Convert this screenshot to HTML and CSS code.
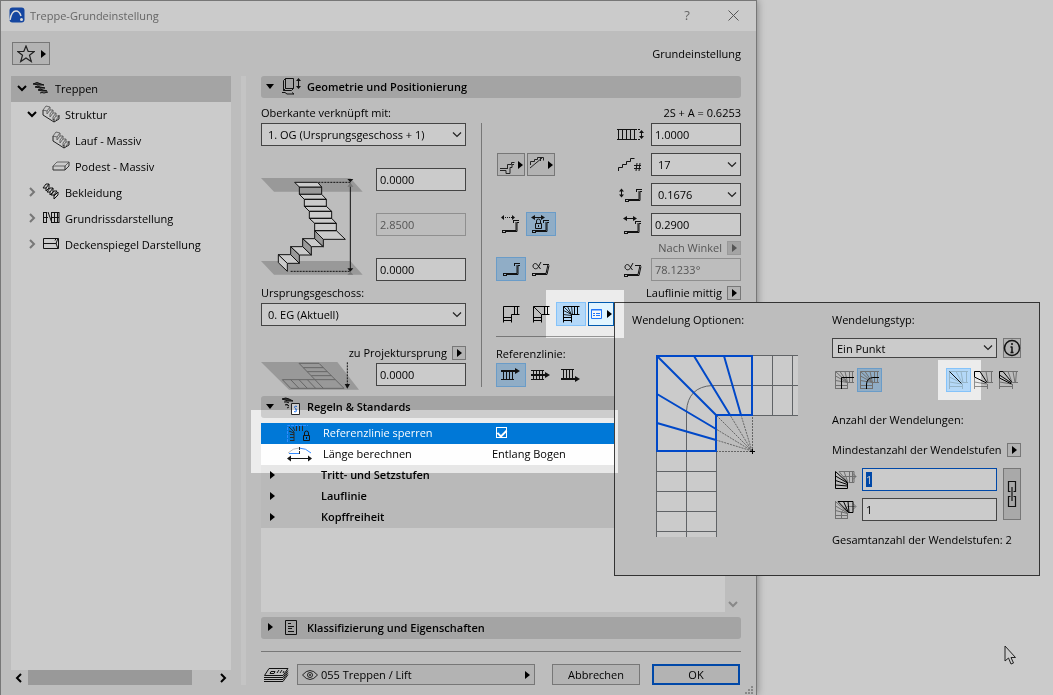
FILE: index.html
```
<!DOCTYPE html>
<html lang="de">
<head>
    <meta charset="UTF-8">
    <meta name="viewport" content="width=device-width, initial-scale=1.0">
    <title>Treppe-Grundeinstellung</title>
    <link rel="stylesheet" href="styles.css">
</head>
<body>

<!-- shared icons -->
<svg class="defs" aria-hidden="true">
    <symbol id="play" viewBox="0 0 5 8"><path d="M0 0L5 4L0 8z" fill="currentColor"/></symbol>
    <symbol id="down" viewBox="0 0 8 5"><path d="M0 0h8L4 5z" fill="currentColor"/></symbol>
    <symbol id="chev-down" viewBox="0 0 10 10"><path d="M1 3l4 4l4-4" fill="none" stroke="currentColor" stroke-width="2"/></symbol>
    <symbol id="chev-right" viewBox="0 0 10 10"><path d="M3 1l4 4l-4 4" fill="none" stroke="currentColor" stroke-width="2"/></symbol>
    <symbol id="chev-left" viewBox="0 0 10 10"><path d="M7 1l-4 4l4 4" fill="none" stroke="currentColor" stroke-width="2"/></symbol>
    <symbol id="stair-solid" viewBox="0 0 18 18">
        <path d="M1 5L4 1l4 1l-3 4zM5 6v3l3-4h3l-3 4M8 9v3l3-4h3l-3 4M11 12v3l3-4h3l-3 4M8 2v3M11 5v3M14 8v3" fill="none" stroke="#666"/>
        <path d="M1 5v5l11 7l5-3v-4M12 17v-3" fill="none" stroke="#222"/>
    </symbol>
    <symbol id="step" viewBox="0 0 18 14">
        <path d="M1 11.500h14V3M12 1.500h6M12.500 1v3M1.500 11v3M1 13.500h4M4 12.500h12V3.500h2" fill="none" stroke="#111"/>
    </symbol>
    <symbol id="alpha-step" viewBox="0 0 20 16">
        <path d="M10 1L7 6.500c-2 2.500-5 1-5-1.500s3-3.500 4.500-1L9.500 8M1 12.500h14l2-9M12 3.500h6M1.500 12v3M1 14.500h4M4 13.500h12l2-9" fill="none" stroke="#111"/>
    </symbol>
    <symbol id="corner" viewBox="0 0 18 18">
        <path d="M17.500 1.500h-16v16M9.500 17.500v-8h8M12.500 1.500v8M15.500 1.500v8M1.500 12.500h8M1.500 15.500h8" fill="none" stroke="currentColor"/>
    </symbol>
    <symbol id="fan" viewBox="0 0 18 18">
        <path d="M1.500 1.500l8 8M5.500 1.500l4 8M9.500 1.500l1 8M1.500 5.500l8 4M1.500 9.500l8 1" fill="none" stroke="currentColor" stroke-width="0.800"/>
    </symbol>
    <symbol id="arrow-h" viewBox="0 0 14 5">
        <path d="M3 2.500h8" stroke="#111" fill="none"/><path d="M0 2.500l4-2.500v5zM14 2.500l-4-2.500v5z" fill="#111"/>
    </symbol>
</svg>

<div class="desktop">
    <div class="dialog">
        <header class="titlebar">
            <svg class="app-icon" width="16" height="16" viewBox="0 0 16 16">
                <rect x="0.500" y="0.500" width="15" height="15" rx="3" fill="#1546a0"/>
                <path d="M1 13C2 7 4 4 7 4s4 2 5 5" fill="none" stroke="#ddd" stroke-width="1.500"/>
                <circle cx="12.500" cy="12.500" r="1.500" fill="#ddd"/>
            </svg>
            <span class="title">Treppe-Grundeinstellung</span>
            <button class="title-button help" aria-label="Hilfe">?</button>
            <button class="title-button" aria-label="Schließen">
                <svg width="11" height="11" viewBox="0 0 11 11"><path d="M0.500 0.500l10 10M10.500 0.500l-10 10" stroke="#555"/></svg>
            </button>
        </header>

        <div class="toolbar">
            <button class="favorite" aria-label="Favoriten">
                <svg width="18" height="18" viewBox="0 0 18 18"><path d="M9 1l2.200 5.500h6l-4.700 3.700l1.800 6.300L9 13L3.700 16.500l1.800-6.300L0.800 6.500h6z" fill="none" stroke="#222" stroke-width="1.200"/></svg>
                <svg width="5" height="8"><use href="#play"/></svg>
            </button>
            <span>Grundeinstellung</span>
        </div>

        <div class="content">
            <nav class="sidebar">
                <ul class="tree">
                    <li class="tree-item selected">
                        <svg width="10" height="10"><use href="#chev-down"/></svg>
                        <svg width="18" height="18" viewBox="0 0 18 18"><path d="M1 5q4-3 8 0l3 1h-5zM3 8q3-2 5 0l5 1h-5zM6 11q2-2 5 0l4 1h-5zM8 14q2-1 4 0l4-1" fill="#444" stroke="#111"/></svg>
                        Treppen
                    </li>
                    <li class="tree-item level-1">
                        <svg width="10" height="10"><use href="#chev-down"/></svg>
                        <svg width="18" height="18"><use href="#stair-solid"/></svg>
                        Struktur
                    </li>
                    <li class="tree-item level-2">
                        <svg width="18" height="18"><use href="#stair-solid"/></svg>
                        Lauf - Massiv
                    </li>
                    <li class="tree-item level-2">
                        <svg width="18" height="18" viewBox="0 0 18 18"><path d="M1 9l4-4h12l-4 4z" fill="none" stroke="#666"/><path d="M1 9v4h12l4-4V5M13 9v4" fill="none" stroke="#333"/></svg>
                        Podest - Massiv
                    </li>
                    <li class="tree-item level-1">
                        <svg class="muted" width="10" height="10"><use href="#chev-right"/></svg>
                        <svg width="18" height="18" viewBox="0 0 18 18"><path d="M1 5l3-4h3L4 5zM4 5v3l3-3M5 9l3-4h3L8 9zM8 9v3l3-3M9 12l3-4h3l-3 4zM12 12v4l4-4v-3l-4 4M7 1v4M11 5v4" fill="none" stroke="#111"/></svg>
                        Bekleidung
                    </li>
                    <li class="tree-item level-1">
                        <svg class="muted" width="10" height="10"><use href="#chev-right"/></svg>
                        <svg width="18" height="18" viewBox="0 0 18 18"><path d="M1.500 3v11M4.500 3v11M1 3.500h4M1 8.500h5M1 13.500h4M6 3l4 11M9.500 3v11M12.500 3v11M15.500 3v11M9 3.500h8M9 13.500h8M9 8.500h8M17 3v11" fill="none" stroke="#111"/></svg>
                        Grundrissdarstellung
                    </li>
                    <li class="tree-item level-1">
                        <svg class="muted" width="10" height="10"><use href="#chev-right"/></svg>
                        <svg width="18" height="18" viewBox="0 0 18 18"><path d="M1.500 3.500h15v10h-15zM1.500 8.500h13M14 3.500l-1 2M14 8.500l2-5M14 8.500l2 5" fill="none" stroke="#111"/></svg>
                        Deckenspiegel Darstellung
                    </li>
                </ul>
                <div class="tree-scroll">
                    <svg width="10" height="10"><use href="#chev-left"/></svg>
                    <div class="thumb"></div>
                    <svg width="10" height="10"><use href="#chev-right"/></svg>
                </div>
            </nav>
            <div class="splitter"></div>

            <main class="settings">
                <h2 class="section-head">
                    <svg class="toggle" width="8" height="5"><use href="#down"/></svg>
                    <svg width="20" height="18" viewBox="0 0 20 18"><path d="M4.500 1.500h8v10h-8zM4.500 1.500l-2 2v10l2-2M2.500 13.500h8l2-2M1 15.500h3l2 1.500h7l-2-1.500" fill="none" stroke="#111"/><path d="M17.500 3v7" stroke="#111"/><path d="M15 4l2.500-3l2.500 3zM15 9l2.500 3l2.500-3z" fill="#111"/></svg>
                    Geometrie und Positionierung
                </h2>

                <div class="geometry">
                    <div class="levels">
                        <label class="label-row" for="top-level">Oberkante verknüpft mit:</label>
                        <select id="top-level"><option>1. OG (Ursprungsgeschoss + 1)</option></select>

                        <div class="height-row">
                            <svg width="104" height="113" viewBox="36 294 312 339">
                                <g fill="#999">
                                    <path d="M36 324H304L341 365H75z"/>
                                    <path d="M36 573H304L341 614H75z"/>
                                </g>
                                <g fill="#cbcbcb" stroke="#111" stroke-width="3" stroke-linejoin="round">
                                    <path d="M151 351H218V373H151z" fill="#999"/>
                                    <path d="M137 337H206L218 351H151zM151 373H218L232 388H166zM166 388H232V409H166zM166 409H232L248 424H181zM181 424H248V445H181zM181 445H248L262 460H197zM197 460H262V482H197zM197 482H262L289 508H223z"/>
                                    <path d="M197 506L223 530H187L161 506zM161 530L187 555H151L125 530zM125 554L151 580H115L88 554z"/>
                                    <path d="M197 482L223 508V530L197 506zM161 506L187 530V555L161 530zM125 530L151 555V580L125 554z" fill="#999"/>
                                    <path d="M88 554L115 580V604L88 578z"/>
                                </g>
                                <path d="M208 337H304M125 604H304" stroke="#111" stroke-width="3" stroke-dasharray="6 3"/>
                                <path d="M304 340V600" stroke="#111" stroke-width="3"/>
                                <path d="M295 327H313L304 337zM295 595H313L304 605z" fill="#111"/>
                                <path d="M295 350L304 338L313 350zM295 614L304 605L313 614z" fill="#777"/>
                            </svg>
                            <div class="heights">
                                <input type="text" value="0.0000" aria-label="Versatz oben">
                                <input type="text" value="2.8500" aria-label="Höhe" disabled>
                                <input type="text" value="0.0000" aria-label="Versatz unten">
                            </div>
                        </div>

                        <label class="label-row" for="home-level">Ursprungsgeschoss:</label>
                        <select id="home-level"><option>0. EG (Aktuell)</option></select>

                        <div class="origin-row">
                            <svg width="98" height="28" viewBox="36 81 294 84">
                                <path d="M36 81H265L330 164H120z" fill="#999"/>
                                <path d="M150 85H210L285 160H125L100 134H198zM163 98H223M175 110H235M187 122H247M198 134H259M198 134L223 160M175 134L200 160M150 134L175 160M125 134L150 160" fill="none" stroke="#666" stroke-width="3"/>
                                <path d="M295 82V150" stroke="#111" stroke-width="3" stroke-dasharray="6 3"/>
                                <path d="M287 147H303L295 161z" fill="#111"/>
                            </svg>
                            <div class="origin">
                                <div class="label-row">
                                    <label for="origin">zu Projektursprung</label>
                                    <button class="mini" aria-label="Bezug wählen"><svg width="5" height="8"><use href="#play"/></svg></button>
                                </div>
                                <input id="origin" type="text" value="0.0000">
                            </div>
                        </div>
                    </div>

                    <div class="steps">
                        <div class="label-row">2S + A = 0.6253</div>
                        <div class="row">
                            <svg width="28" height="14" viewBox="0 0 28 14"><path d="M0 1.500h18M0 11.500h18M1.500 1v11M5.500 1v11M9.500 1v11M13.500 1v11M17.500 1v11M24.500 3v7" stroke="#111"/><path d="M18 1.500h6M18 11.500h6" stroke="#111" stroke-dasharray="2 1"/><path d="M22 5l2.500-3l2.500 3zM22 8l2.500 3l2.500-3z" fill="#111"/></svg>
                            <input type="text" value="1.0000" aria-label="Breite">
                        </div>
                        <div class="row">
                            <div class="tools">
                                <button class="tool menu" aria-label="Stufe unten">
                                    <svg width="16" height="18" viewBox="0 0 16 18"><path d="M1 12.500h7M1 14.500h6v3h4v-6h2v-3h2M8.500 13V8.500h4v-2h3" fill="none" stroke="#222"/></svg>
                                    <svg width="5" height="8"><use href="#play"/></svg>
                                </button>
                                <button class="tool menu" aria-label="Stufe oben">
                                    <svg width="16" height="18" viewBox="0 0 16 18"><path d="M1.500 9V5.500h4v-2h3v-2h6v3M1 12l12-10M11.500 1v4" fill="none" stroke="#222"/></svg>
                                    <svg width="5" height="8"><use href="#play"/></svg>
                                </button>
                            </div>
                            <svg width="28" height="16" viewBox="0 0 28 16"><path d="M1.500 14v-3.500h4v-3h4v-3h4v-3h4M17 8.500h7M17 11.500h7M20 6l-1 8M23 6l-1 8" fill="none" stroke="#111"/></svg>
                            <select aria-label="Anzahl der Steigungen"><option>17</option></select>
                        </div>
                        <div class="row">
                            <svg width="26" height="14" viewBox="0 0 26 14"><use href="#step" x="5" width="18" height="14"/><path d="M2.500 2v6" stroke="#111"/><path d="M0 3.500l2.500-3l2.500 3zM0 6.500l2.500 3l2.500-3z" fill="#111"/></svg>
                            <select aria-label="Steigung"><option>0.1676</option></select>
                        </div>
                        <div class="row">
                            <div class="tools">
                                <button class="tool" aria-label="Auftritt frei">
                                    <svg width="20" height="18" viewBox="0 0 20 18"><path d="M0 2.500l3-2.500v5zM14 2.500l-3-2.500v5z" fill="#111"/><path d="M4 2.500h7" stroke="#111" stroke-dasharray="1 1"/><use href="#step" y="4" width="18" height="14"/></svg>
                                </button>
                                <button class="tool active" aria-label="Auftritt sperren">
                                    <svg width="20" height="18" viewBox="0 0 20 18"><use href="#arrow-h" width="14" height="5"/><use href="#step" y="4" width="18" height="14"/><path d="M4.500 8.500h6v5h-6zM5.500 8V6a2 2 0 0 1 4 0v2M7.500 10v2" fill="none" stroke="#111"/></svg>
                                </button>
                            </div>
                            <svg width="22" height="18" viewBox="0 0 22 18"><use href="#arrow-h" width="14" height="5"/><use href="#step" y="4" width="18" height="14"/></svg>
                            <input type="text" value="0.2900" aria-label="Auftritt">
                        </div>
                        <div class="label-row disabled">
                            Nach Winkel
                            <button class="mini" aria-label="Nach Winkel" disabled><svg width="5" height="8"><use href="#play"/></svg></button>
                        </div>
                        <div class="row">
                            <div class="tools">
                                <button class="tool active" aria-label="Gerade Setzstufe"><svg width="18" height="14"><use href="#step"/></svg></button>
                                <button class="tool" aria-label="Schräge Setzstufe"><svg width="20" height="16"><use href="#alpha-step"/></svg></button>
                            </div>
                            <svg width="22" height="16" viewBox="0 0 22 16"><use href="#alpha-step" width="20" height="16"/></svg>
                            <input type="text" value="78.1233°" aria-label="Winkel" disabled>
                        </div>
                        <div class="label-row">
                            Lauflinie mittig
                            <button class="mini" aria-label="Lauflinie wählen"><svg width="5" height="8"><use href="#play"/></svg></button>
                        </div>
                        <div class="row">
                            <div class="tools">
                                <button class="tool" aria-label="Podest"><svg width="18" height="18"><use href="#corner"/></svg></button>
                                <button class="tool" aria-label="Geteiltes Podest">
                                    <svg width="18" height="18" viewBox="0 0 18 18"><use href="#corner"/><path d="M1.500 1.500l8 8" stroke="#111"/></svg>
                                </button>
                                <button class="tool active" aria-label="Wendelung">
                                    <svg width="18" height="18" viewBox="0 0 18 18"><use href="#corner"/><use href="#fan"/></svg>
                                </button>
                                <div class="options">
                                    <button class="options-button" aria-label="Wendelung Optionen">
                                        <svg width="11" height="10" viewBox="0 0 11 10"><path d="M0.500 0.500h10v9h-10z" fill="#c6c6c6" stroke="#1a5fc8"/><path d="M0 1h11M2 4.500h2M5 4.500h4M2 6.500h2M5 6.500h4" stroke="#1a5fc8"/></svg>
                                        <svg width="5" height="8"><use href="#play"/></svg>
                                    </button>

                                    <div class="popup">
                                        <div class="popup-preview">
                                            <div class="label-row">Wendelung Optionen:</div>
                                            <svg width="143" height="183" viewBox="0 0 143 183">
                                                <path d="M1 1H143V61H61V183H1z" fill="#cbcbcb"/>
                                                <path d="M97 1.500H143M57 31.500H143M97 61.500H143M117.500 1V61M137.500 1V61M1.500 97V183M31.500 183V57Q33 33 57 31.500M61.500 97V183M1 117.500H62M1 137.500H62M1 157.500H62M1 177.500H62" fill="none" stroke="#606366"/>
                                                <path d="M61 97.500H97.500V61M97 97L61 61M97 97L75 61M97 97L86 61M97 97L61 75M97 97L61 86" fill="none" stroke="#666" stroke-dasharray="2 1"/>
                                                <path d="M2 2H97V61H61V97H2zM2 2L61 61M39 2L75 61M69 2L86 61M2 40L61 75M2 69L61 86" fill="none" stroke="#0048c8" stroke-width="2"/>
                                                <path d="M95 97.500h5M97.500 95v5" stroke="#000"/>
                                            </svg>
                                        </div>
                                        <div class="popup-form">
                                            <label class="label-row" for="winder-type">Wendelungstyp:</label>
                                            <div class="type-row">
                                                <select id="winder-type"><option>Ein Punkt</option></select>
                                                <button class="info" aria-label="Information">
                                                    <svg width="18" height="18" viewBox="0 0 18 18"><circle cx="9" cy="9" r="7.500" fill="none" stroke="#111" stroke-width="1.500"/><path d="M9 7.500V14M9 4v2M7.500 13.500h3M7.500 8H9" stroke="#111" stroke-width="1.500"/></svg>
                                                </button>
                                            </div>
                                            <div class="variants">
                                                <button class="variant" aria-label="Lauflinie eckig">
                                                    <svg class="grey" width="19" height="20" viewBox="0 0 19 20"><path d="M0.500 19V1.500H19M12.500 19v-6.500H19M14.500 1v11M17.500 1v11M0 15.500h12M0 18.500h12M0.500 1.500l12 11M5 1.500l7.500 11M10 1.500l2.500 11M0.500 6l12 6.500M0.500 10.500l12 2" fill="none" stroke="currentColor"/><path d="M6.500 19V7.500H19" fill="none" stroke="#000"/></svg>
                                                </button>
                                                <button class="variant active" aria-label="Lauflinie rund">
                                                    <svg class="grey" width="19" height="20" viewBox="0 0 19 20"><path d="M0.500 19V1.500H19M12.500 19v-6.500H19M14.500 1v11M17.500 1v11M0 15.500h12M0 18.500h12M0.500 1.500l12 11M5 1.500l7.500 11M10 1.500l2.500 11M0.500 6l12 6.500M0.500 10.500l12 2" fill="none" stroke="currentColor"/><path d="M6.500 19V14Q7 8 13 7.500H19" fill="none" stroke="#000"/></svg>
                                                </button>
                                                <span class="space"></span>
                                                <button class="variant active" aria-label="Auf Diagonale">
                                                    <svg width="19" height="20" viewBox="0 0 19 20"><path d="M0.500 19V1.500H19M17.500 1v12M13 12.500h6M13.500 19v-5M0 16.500h13M0.500 7l12 6M0.500 12l12 2M7 1.500l6 11M12 1.500l2 11" fill="none" stroke="#78909f"/><path d="M0.500 1.500l12 12" stroke="#111"/></svg>
                                                </button>
                                                <button class="variant" aria-label="Neben Diagonale">
                                                    <svg class="grey" width="19" height="20" viewBox="0 0 19 20"><path d="M0.500 19V1.500H19M17.500 1v12M13 12.500h6M13.500 19v-5M0 16.500h13M0.500 12l12 2M12 1.500l2 11" fill="none" stroke="currentColor"/><path d="M6 1.500l7 11M0.500 7l12 6M6 1.500H0.500V7" fill="none" stroke="#000"/></svg>
                                                </button>
                                                <button class="variant" aria-label="Stufe auf Diagonale">
                                                    <svg class="grey" width="19" height="20" viewBox="0 0 19 20"><path d="M0.500 19V1.500H19M17.500 1l-1 12M14 12.500h5M13.500 19v-5M0 16.500h13M0.500 12l12 2M9 1.500l4 11M14 1.500l2 11" fill="none" stroke="currentColor"/><path d="M4 1.500l9 11M0.500 5l12 8M4 1.500H0.500V8l12 6" fill="none" stroke="#000"/></svg>
                                                </button>
                                                <div class="spotlight spot-variant"></div>
                                            </div>
                                            <div class="label-row count-title">Anzahl der Wendelungen:</div>
                                            <div class="label-row count-mode">
                                                Mindestanzahl der Wendelstufen
                                                <button class="mini" aria-label="Modus wählen"><svg width="5" height="8"><use href="#play"/></svg></button>
                                            </div>
                                            <div class="counts">
                                                <div class="count-fields">
                                                    <label class="count">
                                                        <svg class="grey" width="24" height="20" viewBox="0 0 24 20"><path d="M4 1.500h15v11h-5M4 1.500l9 11M9 1.500l4 11M14.500 1v11M17.500 1v11M8 6.500h13M18 3.500l3 3l-3 3" fill="none" stroke="currentColor"/><path d="M0.500 1.500v17h12v-6l-12-11M0.500 6l12 7M0.500 10.500l12 4M0.500 15l12 1" fill="none" stroke="#000"/></svg>
                                                        <input type="text" id="count-a" value="1" aria-label="Stufen vor der Diagonale">
                                                    </label>
                                                    <label class="count">
                                                        <svg class="grey" width="24" height="20" viewBox="0 0 24 20"><path d="M0.500 1v18M0.500 1.500l12 11M0.500 6l12 7M0.500 10.500l12 3M0 15.500h13M0 18.500h13M12.500 13v6M6.500 19v-7l6-5.500h8M18 3.500l3 3l-3 3" fill="none" stroke="currentColor"/><path d="M3 1.500h15v11h-4.500L3 1.500M8.500 1.500l5 11M13 1.500l1 11" fill="none" stroke="#000"/></svg>
                                                        <input type="text" value="1" aria-label="Stufen nach der Diagonale">
                                                    </label>
                                                </div>
                                                <button class="link" aria-label="Werte verknüpfen">
                                                    <svg width="10" height="28" viewBox="0 0 10 28"><path d="M3.500 11.500h-2v-10h7v10h-2M3.500 16.500h-2v10h7v-10h-2M5 7v14" fill="none" stroke="#111" stroke-width="1.200"/></svg>
                                                </button>
                                            </div>
                                            <div class="label-row total">Gesamtanzahl der Wendelstufen: 2</div>
                                        </div>
                                    </div>
                                </div>
                                <div class="spotlight spot-winder"></div>
                            </div>
                        </div>
                        <hr>
                        <div class="label-row start">Referenzlinie:</div>
                        <div class="row">
                            <div class="tools">
                                <button class="tool active" aria-label="Links">
                                    <svg width="20" height="14" viewBox="0 0 20 14"><path d="M0 11.500h13M2.500 2v10M5.500 2v10M8.500 2v10M11.500 2v10" stroke="#111"/><path d="M0 3h15" stroke="#111" stroke-width="2"/><path d="M14 0l5 3l-5 3z" fill="#111"/></svg>
                                </button>
                                <button class="tool" aria-label="Mitte">
                                    <svg width="20" height="14" viewBox="0 0 20 14"><path d="M0 2.500h13M0 11.500h13M2.500 2v10M5.500 2v10M8.500 2v10M11.500 2v10" stroke="#111"/><path d="M0 7h15" stroke="#111" stroke-width="2"/><path d="M14 4l5 3l-5 3z" fill="#111"/></svg>
                                </button>
                                <button class="tool" aria-label="Rechts">
                                    <svg width="20" height="14" viewBox="0 0 20 14"><path d="M0 1.500h13M2.500 1v10M5.500 1v10M8.500 1v10M11.500 1v10" stroke="#111"/><path d="M0 11h15" stroke="#111" stroke-width="2"/><path d="M14 8l5 3l-5 3z" fill="#111"/></svg>
                                </button>
                            </div>
                        </div>
                    </div>
                </div>

                <h2 class="section-head">
                    <svg class="toggle" width="8" height="5"><use href="#down"/></svg>
                    <svg width="20" height="18" viewBox="0 0 20 18"><path d="M1 2q4-2 7 0l4 2h-5zM3 5q3-1 5 1M4 8q2-2 4 1M6 11l2-1" fill="#333" stroke="#111"/><path d="M10.500 6.500h8v11h-8z" fill="#cbcbcb" stroke="#222"/><path d="M16 9.500c-3-1-3 1-1.500 2s2 1 0 1.500M13 14.500c3 1 3-1 1.500-2" fill="none" stroke="#1a5fc8"/></svg>
                    Regeln &amp; Standards
                </h2>
                <div class="rules">
                    <div class="rules-list">
                        <div class="rule selected">
                            <svg width="26" height="18" viewBox="0 0 26 18"><path d="M1.500 18V1.500H22" fill="none" stroke="#2a6fd0" stroke-dasharray="3 1"/><path d="M4 16.500h4M4 13.500h4M4 10.500h4M3 7l5 2M3 3l5 5M7 3l2 4M10.500 2v5M13.500 2v5M16.500 2v5M8 8v9" fill="none" stroke="#222"/><path d="M17.500 11.500h6v5h-6zM18.500 11V9a2 2 0 0 1 4 0v2M20.500 13v2" fill="none" stroke="#111"/></svg>
                            <label for="lock-line">Referenzlinie sperren</label>
                            <input id="lock-line" type="checkbox" checked>
                        </div>
                        <div class="rule">
                            <svg width="26" height="18" viewBox="0 0 26 18"><path d="M2 8Q7 3 13 3" fill="none" stroke="#999"/><path d="M13 3Q20 3 25 8M3 8.500h10" fill="none" stroke="#2a6fd0"/><path d="M13.500 2v8" stroke="#222" stroke-dasharray="3 1"/><path d="M3 13.500h20" stroke="#111"/><path d="M1 13.500l4-3v6zM26 13.500l-4-3v6z" fill="#111"/></svg>
                            <label for="length-mode">Länge berechnen</label>
                            <select id="length-mode" class="plain"><option>Entlang Bogen</option></select>
                        </div>
                        <div class="spotlight spot-rules"></div>
                        <div class="rule group"><svg width="5" height="8"><use href="#play"/></svg>Tritt- und Setzstufen</div>
                        <div class="rule group"><svg width="5" height="8"><use href="#play"/></svg>Lauflinie</div>
                        <div class="rule group"><svg width="5" height="8"><use href="#play"/></svg>Kopffreiheit</div>
                    </div>
                    <div class="rules-scroll"><svg width="10" height="10"><use href="#chev-down"/></svg></div>
                </div>

                <h2 class="section-head">
                    <svg class="toggle closed" width="5" height="8"><use href="#play"/></svg>
                    <svg width="20" height="18" viewBox="0 0 20 18"><path d="M4.500 2.500h11v14h-11zM7 5.500h3M7 8.500h6M7 10.500h4M7 13.500h6" fill="none" stroke="#111"/></svg>
                    Klassifizierung und Eigenschaften
                </h2>

                <hr class="footer-line">
                <footer class="footer">
                    <svg width="26" height="16" viewBox="0 0 26 16"><path d="M6 1.500h19l-5 7H1.500zM1 10.500h19l5-7M1 12.500h19l5-7M1 14.500h19l5-7M8 4.500h4l-1 2H7zM14 6l2-3M17 6l2-3M20 6l1-2" fill="none" stroke="#111"/></svg>
                    <button class="layer">
                        <svg width="16" height="10" viewBox="0 0 16 10"><path d="M0.500 5Q8-4 15.500 5Q8 14 0.500 5z" fill="none" stroke="#222"/><circle cx="8" cy="5" r="2.500" fill="none" stroke="#222"/><circle cx="8" cy="5" r="1" fill="#222"/></svg>
                        <span>055 Treppen / Lift</span>
                        <svg width="5" height="8"><use href="#play"/></svg>
                    </button>
                    <button class="action">Abbrechen</button>
                    <button class="action primary">OK</button>
                </footer>
            </main>
        </div>
        <svg class="grip" width="9" height="9" viewBox="0 0 9 9"><path d="M6 0h2v2h-2zM3 3h2v2h-2zM6 3h2v2h-2zM0 6h2v2h-2zM3 6h2v2h-2zM6 6h2v2h-2z" fill="#888"/></svg>
    </div>
</div>

<svg class="cursor" width="12" height="20" viewBox="0 0 12 20"><path d="M1 1v15l3.500-3l2.500 6l2.500-1l-2.500-5.500h4.500z" fill="#ccc" stroke="#222"/></svg>

<script>
    const count = document.getElementById('count-a');
    count.focus({ preventScroll: true });
    count.select();
</script>

</body>
</html>
```
FILE: styles.css
```
* {
    box-sizing: border-box;
}

body {
    margin: 0;
    background-color: #cbcbcb;
    color: #000;
    font-family: "Open Sans", "Noto Sans", sans-serif;
    font-size: 11px;
    font-weight: 500;
    line-height: 15px;
}

svg {
    display: block;
    flex: none;
}

button,
input,
select {
    margin: 0;
    padding: 0;
    border-radius: 0;
    color: inherit;
    font: inherit;
}

button {
    display: flex;
    align-items: center;
    justify-content: center;
    flex: none;
    background-color: #b3b3b3;
    border: 1px solid #777;
}

input[type="text"],
select {
    width: 90px;
    height: 23px;
    padding: 0 3px;
    background-color: #cbcbcb;
    border: 1px solid #444;
    outline: none;
}

select {
    appearance: none;
    padding: 0 20px 0 6px;
    background-image: url("data:image/svg+xml,%3Csvg xmlns='http://www.w3.org/2000/svg' width='10' height='6'%3E%3Cpath d='M1 .5l4 4l4-4' fill='none' stroke='%23222' stroke-width='1.2'/%3E%3C/svg%3E");
    background-repeat: no-repeat;
    background-position: right 3px center;
}

input[type="text"]:disabled {
    color: #555;
    background-color: #bdbdbd;
    border-color: #8f8f8f;
}

hr {
    width: 100%;
    height: 1px;
    margin: 0;
    border: none;
    background-color: #777;
}

.defs {
    display: none;
}

.desktop {
    display: grid;
    grid-template-columns: 757fr 296fr;
    min-height: 100vh;
}

.dialog {
    position: relative;
    display: flex;
    flex-direction: column;
    background-color: #bdbdbd;
    border: 1px solid #777;
    border-bottom: none;
    box-shadow: 0 0 8px rgba(0, 0, 0, 0.4);
}

/* title and toolbar */

.titlebar {
    display: flex;
    align-items: center;
    height: 30px;
    padding: 0 0 2px 8px;
    background-color: #cbcbcb;
    color: #666;
}

.title {
    flex: 1;
    margin-left: 5px;
}

.title-button {
    width: 46px;
    height: 28px;
    background: none;
    border: none;
}

.title-button.help {
    font-size: 13px;
}

.toolbar {
    display: flex;
    align-items: center;
    justify-content: space-between;
    height: 45px;
    padding: 0 15px 0 11px;
}

.favorite {
    gap: 6px;
    width: 38px;
    height: 23px;
}

/* tree */

.content {
    display: flex;
    flex: 1;
    padding: 0 15px 10px 10px;
}

.sidebar {
    display: flex;
    flex-direction: column;
    width: 220px;
}

.tree {
    flex: 1;
    margin: 0;
    padding: 0;
    background-color: #cbcbcb;
    list-style: none;
}

.tree-item {
    display: flex;
    align-items: center;
    gap: 5px;
    height: 26px;
    padding: 0 0 2px 6px;
}

.tree-item.selected {
    background-color: #a4a4a4;
}

.tree-item.level-1 {
    padding-left: 16px;
}

.tree-item.level-2 {
    padding-left: 41px;
}

.muted {
    color: #777;
}

.tree-scroll {
    display: flex;
    align-items: center;
    justify-content: space-between;
    height: 15px;
    padding: 0 3px;
}

.thumb {
    flex: 1;
    height: 15px;
    margin: 0 26px 0 4px;
    background-color: #999;
}

.splitter {
    width: 5px;
    margin: 0 15px 0 10px;
    background-color: #c4c4c4;
}

/* settings */

.settings {
    display: flex;
    flex: 1;
    flex-direction: column;
    min-width: 0;
}

.section-head {
    display: flex;
    align-items: center;
    height: 22px;
    margin: 0;
    padding-bottom: 2px;
    background-color: #a4a4a4;
    border-radius: 3px;
    font-size: 11px;
    font-weight: 600;
}

.section-head svg {
    margin-right: 6px;
}

.section-head .toggle {
    margin: 0 7px 0 5px;
}

.section-head .closed {
    margin: 0 8px 0 7px;
}

.geometry {
    display: flex;
    padding: 8px 0 9px;
}

.label-row {
    display: flex;
    align-items: center;
    justify-content: flex-end;
    gap: 5px;
    height: 15px;
    margin: 4px 0 3px;
    white-space: nowrap;
}

.label-row.disabled {
    color: #555;
}

.label-row:first-child {
    margin-top: -1px;
}

label.label-row,
.label-row.start {
    justify-content: flex-start;
}

.mini {
    width: 14px;
    height: 14px;
}

.mini:disabled {
    background-color: #a4a4a4;
    border-color: #999;
}

.levels {
    display: flex;
    flex-direction: column;
    width: 205px;
}

.levels > select {
    width: 100%;
}

.height-row {
    display: flex;
    justify-content: space-between;
    margin-top: 22px;
}

.heights {
    display: flex;
    flex-direction: column;
    justify-content: space-between;
}

.origin-row {
    display: flex;
    align-items: flex-end;
    justify-content: space-between;
    margin-top: 20px;
}

.origin-row > svg {
    margin: 0 -98px -4px 0;
}

.origin {
    display: flex;
    flex: 1;
    flex-direction: column;
    align-items: flex-end;
}

.steps {
    display: flex;
    flex: 1;
    flex-direction: column;
    margin-left: 15px;
    padding-left: 15px;
    background: linear-gradient(#777, #777) no-repeat 0 17px / 1px 100%;
}

.row {
    display: flex;
    align-items: center;
    justify-content: flex-end;
    gap: 6px;
    height: 23px;
}

.row + .row {
    margin-top: 7px;
}

.tools {
    position: relative;
    display: flex;
    align-items: flex-end;
    height: 24px;
    margin: -1px auto 0 0;
}

.tool {
    width: 30px;
    height: 24px;
    background: none;
    border-color: transparent;
}

.tool.menu {
    gap: 3px;
    width: 28px;
    height: 23px;
    margin: 0 1px;
    background-color: #b3b3b3;
    border-color: #777;
}

.tool.active,
.variant.active {
    background-color: #90adc6;
    border-color: #6a9cc8;
}

.steps hr {
    margin: 10px 0 5px;
}

.options {
    position: relative;
}

.options-button {
    gap: 5px;
    width: 26px;
    height: 24px;
    margin-left: 2px;
    background-color: #b4c4d0;
    border-color: #00488c;
}

/* winder popup */

.popup {
    position: absolute;
    z-index: 2;
    top: 0;
    left: 100%;
    display: flex;
    width: 426px;
    padding: 10px 18px 25px 17px;
    background-color: #bdbdbd;
    border: 1px solid #333;
}

.popup-preview {
    width: 200px;
}

.popup-preview .label-row {
    justify-content: flex-start;
}

.popup-preview svg {
    margin: 27px 0 0 23px;
}

.popup-form {
    flex: 1;
    min-width: 0;
}

.type-row {
    display: flex;
    gap: 6px;
    margin-top: 11px;
}

.type-row select {
    flex: 1;
    height: 20px;
    padding-left: 4px;
}

.info {
    width: 18px;
    height: 20px;
}

.variants {
    position: relative;
    display: flex;
    height: 24px;
    margin-top: 10px;
}

.variant {
    width: 25px;
    height: 24px;
    background: none;
    border-color: transparent;
}

.grey {
    color: #707070;
}

.space {
    flex: 1;
}

.label-row.count-title {
    justify-content: flex-start;
    margin-top: 20px;
}

.label-row.count-mode {
    justify-content: space-between;
    margin-top: 15px;
}

.counts {
    display: flex;
    gap: 6px;
    margin-top: 11px;
}

.count-fields {
    display: flex;
    flex: 1;
    flex-direction: column;
    gap: 7px;
}

.count {
    display: flex;
    align-items: center;
    gap: 6px;
}

.count svg {
    margin-left: 3px;
    margin-right: -3px;
}

.count input[type="text"] {
    flex: 1;
    min-width: 0;
}

.count input:focus {
    border-color: #0048a8;
}

.count input::selection {
    background-color: #0048a8;
    color: #ccc;
}

.link {
    width: 18px;
    height: 52px;
    background-color: #a9a9a9;
}

.label-row.total {
    justify-content: flex-start;
    margin-top: 11px;
}

/* rules list */

.rules {
    display: flex;
    flex: 1;
    margin: 5px 0;
}

.rules-list {
    position: relative;
    flex: 1;
    background-color: #cbcbcb;
}

.rule {
    display: grid;
    grid-template-columns: 26px 158px 1fr;
    align-items: center;
    height: 21px;
    padding: 0 0 2px 25px;
    column-gap: 11px;
}

.rule.selected {
    background-color: #0060ac;
    color: #ccc;
}

.rule.group {
    grid-template-columns: 5px 1fr;
    column-gap: 46px;
    padding-left: 9px;
    background-color: #b9b9b9;
    font-weight: 600;
}

.rule input {
    display: grid;
    place-items: center;
    appearance: none;
    width: 11px;
    height: 11px;
    margin-left: 4px;
    border: 1px solid #ccc;
}

.rule input:checked::before {
    content: "";
    width: 4px;
    height: 7px;
    border: solid #ccc;
    border-width: 0 2px 2px 0;
    transform: rotate(45deg);
}

select.plain {
    width: 120px;
    height: 19px;
    padding: 0;
    background: none;
    border: none;
}

.rules-scroll {
    display: flex;
    align-items: flex-end;
    justify-content: center;
    width: 16px;
    padding-bottom: 3px;
    color: #888;
}

/* highlighted areas: brightens everything below */

.spotlight {
    position: absolute;
    z-index: 3;
    background-color: #333;
    mix-blend-mode: color-dodge;
    pointer-events: none;
}

.spot-winder {
    top: -12px;
    left: 50px;
    width: 78px;
    height: 48px;
}

.spot-rules {
    top: -13px;
    left: -10px;
    width: 367px;
    height: 63px;
}

.spot-variant {
    top: -8px;
    right: 40px;
    width: 43px;
    height: 40px;
}

/* footer */

.footer-line {
    margin: 12px 0;
}

.footer {
    display: flex;
    align-items: center;
    padding: 0 1px 0 2px;
}

.layer {
    flex: 1;
    gap: 3px;
    height: 21px;
    margin: 0 17px 0 8px;
    padding: 0 4px;
}

.layer span {
    flex: 1;
    text-align: left;
}

.action {
    width: 88px;
    height: 21px;
}

.action + .action {
    margin-left: 12px;
}

.action.primary {
    border: 2px solid #0048a8;
}

.grip {
    position: absolute;
    right: 2px;
    bottom: 0;
}

.cursor {
    position: absolute;
    top: 645px;
    left: 1004px;
}
```
